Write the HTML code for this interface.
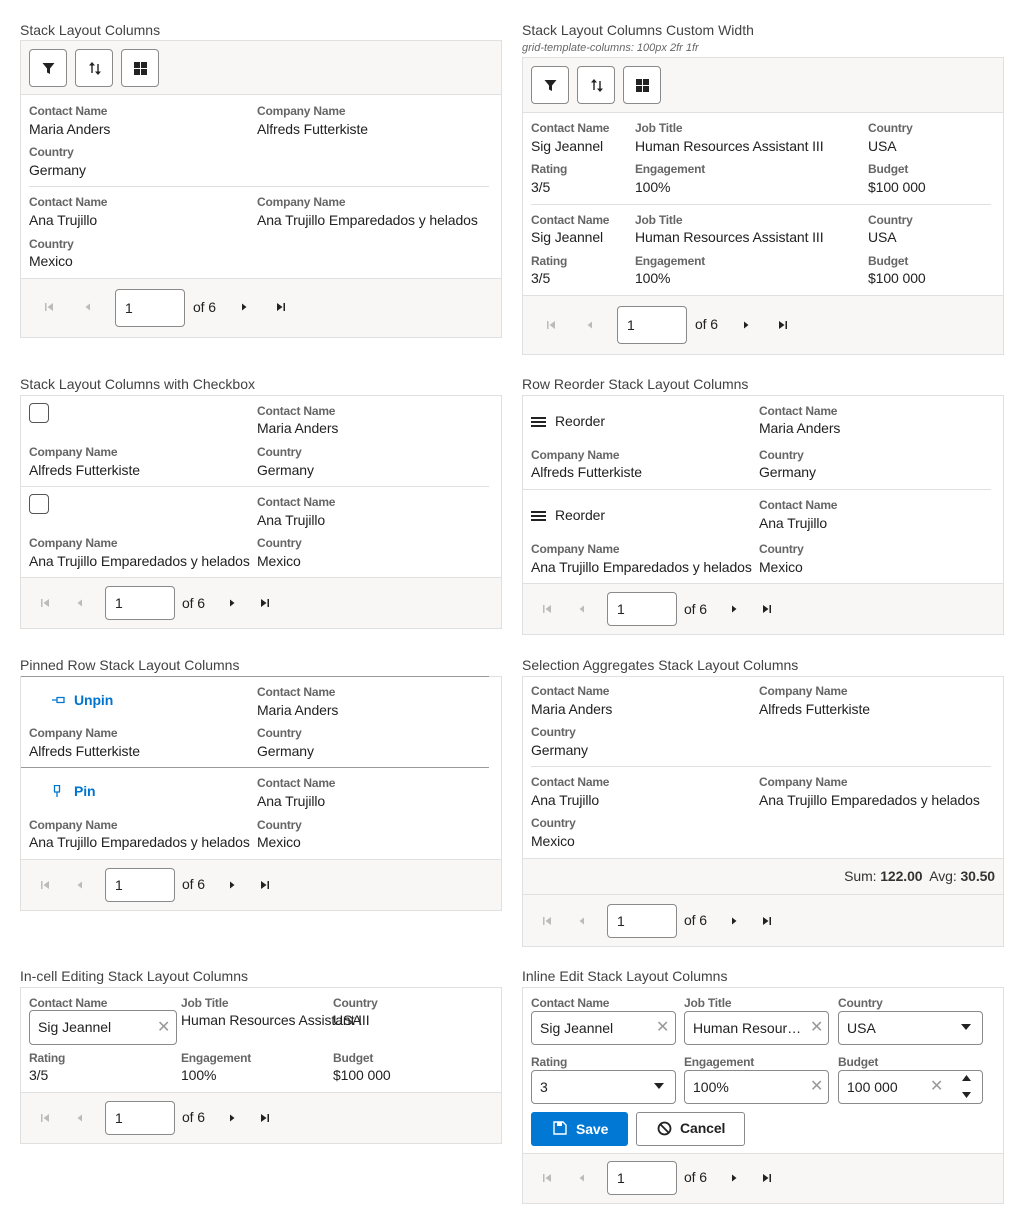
<!DOCTYPE html>
<html><head><meta charset="utf-8"><style>
*{margin:0;padding:0;box-sizing:border-box}
body{width:1024px;height:1223px;background:#fff;position:relative;font-family:"Liberation Sans",Arial,sans-serif;color:#212121;overflow:hidden}
div,span{position:absolute}
.t{font-size:14px;color:#424242;white-space:nowrap;line-height:16px}
.box{border:1px solid #e0e0e0;background:#fff}
.bar{background:#f8f7f6}
.lb{font-size:12px;font-weight:bold;color:#666;line-height:14px;white-space:nowrap;letter-spacing:-0.2px}
.v{font-size:14px;color:#212121;line-height:16px;white-space:nowrap;letter-spacing:-0.1px}
.sep{height:1px;background:#e0e0e0}
.btn{width:38px;height:38px;border:1px solid #8a8a8a;border-radius:4px;background:#fff}
.pi{width:70px;height:38px;border:1px solid #8a8a8a;border-radius:4px;background:#fff;font-size:14px;padding:9px 0 0 9px;line-height:18px}
.inp{height:34px;border:1px solid #8a8a8a;border-radius:4px;background:#fff;font-size:14px;line-height:16px;padding:8px 0 0 8px;white-space:nowrap;overflow:hidden}
.x{font-size:16px;color:#999;line-height:16px}
.cb{width:20px;height:20px;border:1px solid #555;border-radius:4px}
</style></head><body>

<svg width="0" height="0" style="position:absolute">
<defs>
<g id="first"><rect x="1" y="1" width="1.5" height="8" fill="#bbb"/><path d="M9 1 L3.5 5 L9 9Z" fill="#bbb"/></g>
<g id="prev"><path d="M7 1.5 L2.5 5 L7 8.5Z" fill="#bbb"/></g>
<g id="next"><path d="M3 1.5 L7.5 5 L3 8.5Z" fill="#222"/></g>
<g id="last"><path d="M1 1 L6.5 5 L1 9Z" fill="#222"/><rect x="7.5" y="1" width="1.5" height="8" fill="#222"/></g>
</defs></svg>

<!-- ============ Panel 1 ============ -->
<div class="t" style="left:20px;top:22px">Stack Layout Columns</div>
<div class="box" style="left:20px;top:40px;width:482px;height:298px"></div>
<div class="bar" style="left:21px;top:41px;width:480px;height:54px;border-bottom:1px solid #e0e0e0"></div>
<div class="btn" style="left:29px;top:49px"><svg style="position:absolute;left:12px;top:12px" width="13" height="13"><path d="M0.5 1 H12.5 L8 6.5 V12 L5 10.5 V6.5Z" fill="#222"/></svg></div>
<div class="btn" style="left:75px;top:49px"><svg style="position:absolute;left:12px;top:11px" width="14" height="15"><path d="M4 1 L1 4.5 H3.3 V12 H4.7 V4.5 H7Z M10 14 L13 10.5 H10.7 V3 H9.3 V10.5 H7Z" fill="#222"/></svg></div>
<div class="btn" style="left:121px;top:49px"><svg style="position:absolute;left:12px;top:12px" width="13" height="13"><rect x="0" y="0" width="6" height="6" fill="#222"/><rect x="7" y="0" width="6" height="6" fill="#222"/><rect x="0" y="7" width="6" height="6" fill="#222"/><rect x="7" y="7" width="6" height="6" fill="#222"/></svg></div>
<div class="lb" style="left:29px;top:104px">Contact Name</div><div class="v" style="left:29px;top:121px">Maria Anders</div>
<div class="lb" style="left:257px;top:104px">Company Name</div><div class="v" style="left:257px;top:121px">Alfreds Futterkiste</div>
<div class="lb" style="left:29px;top:145px">Country</div><div class="v" style="left:29px;top:162px">Germany</div>
<div class="sep" style="left:29px;top:186px;width:460px"></div>
<div class="lb" style="left:29px;top:195px">Contact Name</div><div class="v" style="left:29px;top:212px">Ana Trujillo</div>
<div class="lb" style="left:257px;top:195px">Company Name</div><div class="v" style="left:257px;top:212px">Ana Trujillo Emparedados y helados</div>
<div class="lb" style="left:29px;top:237px">Country</div><div class="v" style="left:29px;top:253px">Mexico</div>
<div class="bar" style="left:21px;top:278px;width:480px;height:59px;border-top:1px solid #e0e0e0"></div>
<svg style="position:absolute;left:44px;top:302px" width="10" height="10"><use href="#first"/></svg>
<svg style="position:absolute;left:83px;top:302px" width="10" height="10"><use href="#prev"/></svg>
<div class="pi" style="left:115px;top:289px">1</div>
<div class="v" style="left:193px;top:299px">of 6</div>
<svg style="position:absolute;left:239px;top:302px" width="10" height="10"><use href="#next"/></svg>
<svg style="position:absolute;left:276px;top:302px" width="10" height="10"><use href="#last"/></svg>

<!-- ============ Panel 2 ============ -->
<div class="t" style="left:522px;top:22px">Stack Layout Columns Custom Width</div>
<div style="left:522px;top:42px;font-size:11px;font-style:italic;color:#666;white-space:nowrap">grid-template-columns: 100px 2fr 1fr</div>
<div class="box" style="left:522px;top:57px;width:482px;height:298px"></div>
<div class="bar" style="left:523px;top:58px;width:480px;height:55px;border-bottom:1px solid #e0e0e0"></div>
<div class="btn" style="left:531px;top:66px"><svg style="position:absolute;left:12px;top:12px" width="13" height="13"><path d="M0.5 1 H12.5 L8 6.5 V12 L5 10.5 V6.5Z" fill="#222"/></svg></div>
<div class="btn" style="left:577px;top:66px"><svg style="position:absolute;left:12px;top:11px" width="14" height="15"><path d="M4 1 L1 4.5 H3.3 V12 H4.7 V4.5 H7Z M10 14 L13 10.5 H10.7 V3 H9.3 V10.5 H7Z" fill="#222"/></svg></div>
<div class="btn" style="left:623px;top:66px"><svg style="position:absolute;left:12px;top:12px" width="13" height="13"><rect x="0" y="0" width="6" height="6" fill="#222"/><rect x="7" y="0" width="6" height="6" fill="#222"/><rect x="0" y="7" width="6" height="6" fill="#222"/><rect x="7" y="7" width="6" height="6" fill="#222"/></svg></div>
<div class="lb" style="left:531px;top:121px">Contact Name</div><div class="v" style="left:531px;top:138px">Sig Jeannel</div>
<div class="lb" style="left:635px;top:121px">Job Title</div><div class="v" style="left:635px;top:138px">Human Resources Assistant III</div>
<div class="lb" style="left:868px;top:121px">Country</div><div class="v" style="left:868px;top:138px">USA</div>
<div class="lb" style="left:531px;top:162px">Rating</div><div class="v" style="left:531px;top:179px">3/5</div>
<div class="lb" style="left:635px;top:162px">Engagement</div><div class="v" style="left:635px;top:179px">100%</div>
<div class="lb" style="left:868px;top:162px">Budget</div><div class="v" style="left:868px;top:179px">$100 000</div>
<div class="sep" style="left:531px;top:204px;width:460px"></div>
<div class="lb" style="left:531px;top:213px">Contact Name</div><div class="v" style="left:531px;top:229px">Sig Jeannel</div>
<div class="lb" style="left:635px;top:213px">Job Title</div><div class="v" style="left:635px;top:229px">Human Resources Assistant III</div>
<div class="lb" style="left:868px;top:213px">Country</div><div class="v" style="left:868px;top:229px">USA</div>
<div class="lb" style="left:531px;top:254px">Rating</div><div class="v" style="left:531px;top:270px">3/5</div>
<div class="lb" style="left:635px;top:254px">Engagement</div><div class="v" style="left:635px;top:270px">100%</div>
<div class="lb" style="left:868px;top:254px">Budget</div><div class="v" style="left:868px;top:270px">$100 000</div>
<div class="bar" style="left:523px;top:295px;width:480px;height:59px;border-top:1px solid #e0e0e0"></div>
<svg style="position:absolute;left:546px;top:320px" width="10" height="10"><use href="#first"/></svg>
<svg style="position:absolute;left:585px;top:320px" width="10" height="10"><use href="#prev"/></svg>
<div class="pi" style="left:617px;top:306px">1</div>
<div class="v" style="left:695px;top:316px">of 6</div>
<svg style="position:absolute;left:741px;top:320px" width="10" height="10"><use href="#next"/></svg>
<svg style="position:absolute;left:778px;top:320px" width="10" height="10"><use href="#last"/></svg>

<!-- ============ Panel 3 ============ -->
<div class="t" style="left:20px;top:376px">Stack Layout Columns with Checkbox</div>
<div class="box" style="left:20px;top:395px;width:482px;height:234px"></div>
<div class="cb" style="left:29px;top:403px"></div>
<div class="lb" style="left:257px;top:404px">Contact Name</div><div class="v" style="left:257px;top:420px">Maria Anders</div>
<div class="lb" style="left:29px;top:445px">Company Name</div><div class="v" style="left:29px;top:462px">Alfreds Futterkiste</div>
<div class="lb" style="left:257px;top:445px">Country</div><div class="v" style="left:257px;top:462px">Germany</div>
<div class="sep" style="left:21px;top:486px;width:468px"></div>
<div class="cb" style="left:29px;top:494px"></div>
<div class="lb" style="left:257px;top:495px">Contact Name</div><div class="v" style="left:257px;top:512px">Ana Trujillo</div>
<div class="lb" style="left:29px;top:536px">Company Name</div><div class="v" style="left:29px;top:553px">Ana Trujillo Emparedados y helados</div>
<div class="lb" style="left:257px;top:536px">Country</div><div class="v" style="left:257px;top:553px">Mexico</div>
<div class="bar" style="left:21px;top:577px;width:480px;height:51px;border-top:1px solid #e0e0e0"></div>
<svg style="position:absolute;left:40px;top:598px" width="10" height="10"><use href="#first"/></svg>
<svg style="position:absolute;left:75px;top:598px" width="10" height="10"><use href="#prev"/></svg>
<div class="pi" style="left:105px;top:586px;height:34px;padding-top:7px">1</div>
<div class="v" style="left:182px;top:595px">of 6</div>
<svg style="position:absolute;left:227px;top:598px" width="10" height="10"><use href="#next"/></svg>
<svg style="position:absolute;left:260px;top:598px" width="10" height="10"><use href="#last"/></svg>

<!-- ============ Panel 4 ============ -->
<div class="t" style="left:522px;top:376px">Row Reorder Stack Layout Columns</div>
<div class="box" style="left:522px;top:395px;width:482px;height:240px"></div>
<svg style="position:absolute;left:531px;top:417px" width="15" height="10"><rect y="0" width="15" height="2" fill="#222"/><rect y="4" width="15" height="2" fill="#222"/><rect y="8" width="15" height="2" fill="#222"/></svg>
<div class="v" style="left:555px;top:413px">Reorder</div>
<div class="lb" style="left:759px;top:404px">Contact Name</div><div class="v" style="left:759px;top:420px">Maria Anders</div>
<div class="lb" style="left:531px;top:448px">Company Name</div><div class="v" style="left:531px;top:464px">Alfreds Futterkiste</div>
<div class="lb" style="left:759px;top:448px">Country</div><div class="v" style="left:759px;top:464px">Germany</div>
<div class="sep" style="left:523px;top:489px;width:468px"></div>
<svg style="position:absolute;left:531px;top:511px" width="15" height="10"><rect y="0" width="15" height="2" fill="#222"/><rect y="4" width="15" height="2" fill="#222"/><rect y="8" width="15" height="2" fill="#222"/></svg>
<div class="v" style="left:555px;top:507px">Reorder</div>
<div class="lb" style="left:759px;top:498px">Contact Name</div><div class="v" style="left:759px;top:515px">Ana Trujillo</div>
<div class="lb" style="left:531px;top:542px">Company Name</div><div class="v" style="left:531px;top:559px">Ana Trujillo Emparedados y helados</div>
<div class="lb" style="left:759px;top:542px">Country</div><div class="v" style="left:759px;top:559px">Mexico</div>
<div class="bar" style="left:523px;top:583px;width:480px;height:51px;border-top:1px solid #e0e0e0"></div>
<svg style="position:absolute;left:542px;top:604px" width="10" height="10"><use href="#first"/></svg>
<svg style="position:absolute;left:577px;top:604px" width="10" height="10"><use href="#prev"/></svg>
<div class="pi" style="left:607px;top:592px;height:34px;padding-top:7px">1</div>
<div class="v" style="left:684px;top:601px">of 6</div>
<svg style="position:absolute;left:729px;top:604px" width="10" height="10"><use href="#next"/></svg>
<svg style="position:absolute;left:762px;top:604px" width="10" height="10"><use href="#last"/></svg>

<!-- ============ Panel 5 ============ -->
<div class="t" style="left:20px;top:657px">Pinned Row Stack Layout Columns</div>
<div class="box" style="left:20px;top:676px;width:482px;height:235px"></div>
<div style="left:21px;top:676px;width:468px;height:1px;background:#999"></div>
<svg style="position:absolute;left:52px;top:696px" width="13" height="8"><path d="M0 4 H5 M5 1 V7 M5 1.5 H12 V6.5 H5" stroke="#0075d0" stroke-width="1.3" fill="none"/></svg>
<div class="v" style="left:74px;top:692px;color:#0075d0;font-weight:bold">Unpin</div>
<div class="lb" style="left:257px;top:685px">Contact Name</div><div class="v" style="left:257px;top:702px">Maria Anders</div>
<div class="lb" style="left:29px;top:726px">Company Name</div><div class="v" style="left:29px;top:743px">Alfreds Futterkiste</div>
<div class="lb" style="left:257px;top:726px">Country</div><div class="v" style="left:257px;top:743px">Germany</div>
<div style="left:21px;top:767px;width:468px;height:1px;background:#999"></div>
<svg style="position:absolute;left:53px;top:785px" width="8" height="13"><path d="M4 12 V7 M1 7 H7 M1.5 7 V0.5 H6.5 V7" stroke="#0075d0" stroke-width="1.3" fill="none"/></svg>
<div class="v" style="left:74px;top:783px;color:#0075d0;font-weight:bold">Pin</div>
<div class="lb" style="left:257px;top:776px">Contact Name</div><div class="v" style="left:257px;top:793px">Ana Trujillo</div>
<div class="lb" style="left:29px;top:818px">Company Name</div><div class="v" style="left:29px;top:834px">Ana Trujillo Emparedados y helados</div>
<div class="lb" style="left:257px;top:818px">Country</div><div class="v" style="left:257px;top:834px">Mexico</div>
<div class="bar" style="left:21px;top:859px;width:480px;height:51px;border-top:1px solid #e0e0e0"></div>
<svg style="position:absolute;left:40px;top:880px" width="10" height="10"><use href="#first"/></svg>
<svg style="position:absolute;left:75px;top:880px" width="10" height="10"><use href="#prev"/></svg>
<div class="pi" style="left:105px;top:868px;height:34px;padding-top:7px">1</div>
<div class="v" style="left:182px;top:876px">of 6</div>
<svg style="position:absolute;left:227px;top:880px" width="10" height="10"><use href="#next"/></svg>
<svg style="position:absolute;left:260px;top:880px" width="10" height="10"><use href="#last"/></svg>

<!-- ============ Panel 6 ============ -->
<div class="t" style="left:522px;top:657px">Selection Aggregates Stack Layout Columns</div>
<div class="box" style="left:522px;top:676px;width:482px;height:271px"></div>
<div class="lb" style="left:531px;top:684px">Contact Name</div><div class="v" style="left:531px;top:701px">Maria Anders</div>
<div class="lb" style="left:759px;top:684px">Company Name</div><div class="v" style="left:759px;top:701px">Alfreds Futterkiste</div>
<div class="lb" style="left:531px;top:725px">Country</div><div class="v" style="left:531px;top:742px">Germany</div>
<div class="sep" style="left:531px;top:766px;width:460px"></div>
<div class="lb" style="left:531px;top:775px">Contact Name</div><div class="v" style="left:531px;top:792px">Ana Trujillo</div>
<div class="lb" style="left:759px;top:775px">Company Name</div><div class="v" style="left:759px;top:792px">Ana Trujillo Emparedados y helados</div>
<div class="lb" style="left:531px;top:816px">Country</div><div class="v" style="left:531px;top:833px">Mexico</div>
<div class="bar" style="left:523px;top:858px;width:480px;height:37px;border-top:1px solid #e0e0e0;border-bottom:1px solid #e0e0e0"></div>
<div class="v" style="right:29px;top:868px;color:#333">Sum: <b>122.00</b>&nbsp; Avg: <b>30.50</b></div>
<div class="bar" style="left:523px;top:895px;width:480px;height:51px"></div>
<svg style="position:absolute;left:542px;top:916px" width="10" height="10"><use href="#first"/></svg>
<svg style="position:absolute;left:577px;top:916px" width="10" height="10"><use href="#prev"/></svg>
<div class="pi" style="left:607px;top:904px;height:34px;padding-top:7px">1</div>
<div class="v" style="left:684px;top:912px">of 6</div>
<svg style="position:absolute;left:729px;top:916px" width="10" height="10"><use href="#next"/></svg>
<svg style="position:absolute;left:762px;top:916px" width="10" height="10"><use href="#last"/></svg>

<!-- ============ Panel 7 ============ -->
<div class="t" style="left:20px;top:968px">In-cell Editing Stack Layout Columns</div>
<div class="box" style="left:20px;top:987px;width:482px;height:157px"></div>
<div class="lb" style="left:29px;top:996px">Contact Name</div>
<div class="lb" style="left:181px;top:996px">Job Title</div>
<div class="lb" style="left:333px;top:996px">Country</div>
<div class="inp" style="left:29px;top:1010px;width:148px;height:35px">Sig Jeannel</div>
<div class="x" style="left:157px;top:1020px">✕</div>
<div class="v" style="left:181px;top:1012px">Human Resources Assistant III</div>
<div class="v" style="left:333px;top:1012px">USA</div>
<div class="lb" style="left:29px;top:1051px">Rating</div><div class="v" style="left:29px;top:1067px">3/5</div>
<div class="lb" style="left:181px;top:1051px">Engagement</div><div class="v" style="left:181px;top:1067px">100%</div>
<div class="lb" style="left:333px;top:1051px">Budget</div><div class="v" style="left:333px;top:1067px">$100 000</div>
<div class="bar" style="left:21px;top:1092px;width:480px;height:51px;border-top:1px solid #e0e0e0"></div>
<svg style="position:absolute;left:40px;top:1113px" width="10" height="10"><use href="#first"/></svg>
<svg style="position:absolute;left:75px;top:1113px" width="10" height="10"><use href="#prev"/></svg>
<div class="pi" style="left:105px;top:1101px;height:34px;padding-top:7px">1</div>
<div class="v" style="left:182px;top:1109px">of 6</div>
<svg style="position:absolute;left:227px;top:1113px" width="10" height="10"><use href="#next"/></svg>
<svg style="position:absolute;left:260px;top:1113px" width="10" height="10"><use href="#last"/></svg>

<!-- ============ Panel 8 ============ -->
<div class="t" style="left:522px;top:968px">Inline Edit Stack Layout Columns</div>
<div class="box" style="left:522px;top:987px;width:482px;height:217px"></div>
<div class="lb" style="left:531px;top:996px">Contact Name</div>
<div class="lb" style="left:684px;top:996px">Job Title</div>
<div class="lb" style="left:838px;top:996px">Country</div>
<div class="inp" style="left:531px;top:1011px;width:145px">Sig Jeannel</div>
<div class="x" style="left:656px;top:1020px">✕</div>
<div class="inp" style="left:684px;top:1011px;width:145px">Human Resour…</div>
<div class="x" style="left:810px;top:1020px;background:#fff">✕</div>
<div class="inp" style="left:838px;top:1011px;width:145px">USA</div>
<svg style="position:absolute;left:961px;top:1024px" width="10" height="6"><path d="M0 0 H10 L5 6Z" fill="#222"/></svg>
<div class="lb" style="left:531px;top:1055px">Rating</div>
<div class="lb" style="left:684px;top:1055px">Engagement</div>
<div class="lb" style="left:838px;top:1055px">Budget</div>
<div class="inp" style="left:531px;top:1070px;width:145px">3</div>
<svg style="position:absolute;left:654px;top:1083px" width="10" height="6"><path d="M0 0 H10 L5 6Z" fill="#222"/></svg>
<div class="inp" style="left:684px;top:1070px;width:145px">100%</div>
<div class="x" style="left:810px;top:1079px">✕</div>
<div class="inp" style="left:838px;top:1070px;width:145px">100 000</div>
<div class="x" style="left:930px;top:1079px">✕</div>
<svg style="position:absolute;left:962px;top:1075px" width="9" height="6"><path d="M0 6 H9 L4.5 0Z" fill="#222"/></svg>
<svg style="position:absolute;left:962px;top:1092px" width="9" height="6"><path d="M0 0 H9 L4.5 6Z" fill="#222"/></svg>
<div style="left:531px;top:1112px;width:97px;height:34px;background:#0078d4;border-radius:3px"></div>
<svg style="position:absolute;left:553px;top:1121px" width="14" height="14"><path d="M1 1 H10 L13 4 V13 H1Z" fill="none" stroke="#fff" stroke-width="1.4"/><rect x="4" y="1" width="5" height="4" fill="#fff"/></svg>
<div class="v" style="left:576px;top:1121px;color:#fff;font-weight:bold">Save</div>
<div style="left:636px;top:1112px;width:109px;height:34px;border:1px solid #8a8a8a;border-radius:3px;background:#fff"></div>
<svg style="position:absolute;left:657px;top:1121px" width="15" height="15"><circle cx="7.5" cy="7.5" r="6" fill="none" stroke="#222" stroke-width="1.8"/><path d="M3.3 3.3 L11.7 11.7" stroke="#222" stroke-width="1.8"/></svg>
<div class="v" style="left:680px;top:1120px;color:#222;font-weight:bold">Cancel</div>
<div class="bar" style="left:523px;top:1153px;width:480px;height:50px;border-top:1px solid #e0e0e0"></div>
<svg style="position:absolute;left:542px;top:1173px" width="10" height="10"><use href="#first"/></svg>
<svg style="position:absolute;left:577px;top:1173px" width="10" height="10"><use href="#prev"/></svg>
<div class="pi" style="left:607px;top:1161px;height:34px;padding-top:7px">1</div>
<div class="v" style="left:684px;top:1169px">of 6</div>
<svg style="position:absolute;left:729px;top:1173px" width="10" height="10"><use href="#next"/></svg>
<svg style="position:absolute;left:762px;top:1173px" width="10" height="10"><use href="#last"/></svg>

</body></html>
